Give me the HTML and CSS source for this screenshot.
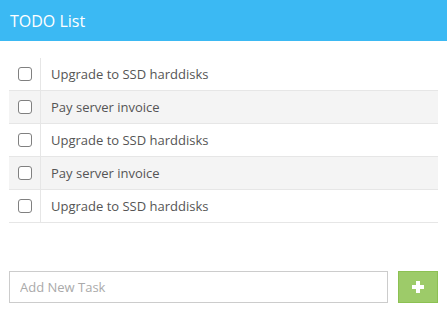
FILE: index.html
```html
<!DOCTYPE html>
<html>
<head>
  <link rel="stylesheet" href="styles.css">
</head>
<body>
  <div class="header">TODO List</div>

  <ul class="todo-list">
    <li class="todo-item"><span class="check"><input type="checkbox"></span><span class="label">Upgrade to SSD harddisks</span></li>
    <li class="todo-item"><span class="check"><input type="checkbox"></span><span class="label">Pay server invoice</span></li>
    <li class="todo-item"><span class="check"><input type="checkbox"></span><span class="label">Upgrade to SSD harddisks</span></li>
    <li class="todo-item"><span class="check"><input type="checkbox"></span><span class="label">Pay server invoice</span></li>
    <li class="todo-item"><span class="check"><input type="checkbox"></span><span class="label">Upgrade to SSD harddisks</span></li>
  </ul>

  <div class="add-task">
    <input type="text" class="new-task" placeholder="Add New Task">
    <button class="add-btn">
      <svg width="14" height="14" viewBox="0 0 14 14"><path d="M5 1h4v4h4v4H9v4H5V9H1V5h4z" fill="#fff"/></svg>
    </button>
  </div>
</body>
</html>
```

FILE: styles.css
```css
body {
  margin: 0;
  font-family: "Open Sans", sans-serif;
  color: #555;
  background: #fff;
}

.header {
  height: 41px;
  line-height: 42px;
  background-color: #3bb9f3;
  color: #fff;
  font-size: 16px;
  padding-left: 10px;
}

.todo-list {
  list-style: none;
  margin: 17px 9px 0;
  padding: 0;
}

.todo-item {
  display: flex;
  align-items: center;
  height: 32px;
  border-bottom: 1px solid #e6e6e6;
  font-size: 13px;
}

.todo-item:nth-child(even) {
  background-color: #f4f4f4;
}

.check {
  width: 31px;
  height: 100%;
  border-right: 1px solid #e6e6e6;
  display: flex;
  align-items: center;
  justify-content: center;
}

.check input {
  appearance: none;
  width: 14px;
  height: 14px;
  margin: 0 0 0 1px;
  border: 1px solid #808080;
  border-radius: 3px;
  background: #fff;
}

.label {
  padding-left: 10px;
}

.add-task {
  display: flex;
  gap: 10px;
  margin: 48px 9px 0;
}

.new-task {
  flex: 1;
  height: 32px;
  box-sizing: border-box;
  border: 1px solid #ccc;
  padding: 0 10px;
  font-family: "Open Sans", sans-serif;
  font-size: 13px;
  color: #555;
  outline: none;
}

.new-task::placeholder {
  color: #aaa;
}

.add-btn {
  width: 40px;
  height: 32px;
  border: 1px solid #8cc152;
  background-color: #9dcb69;
  padding: 0;
  display: flex;
  align-items: center;
  justify-content: center;
}
```
